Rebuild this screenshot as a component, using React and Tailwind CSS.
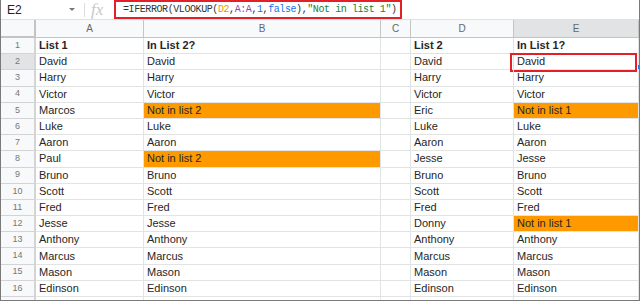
const cols = [
  { key: 'A', w: 'w-[108px]' },
  { key: 'B', w: 'w-[237px]' },
  { key: 'C', w: 'w-[30px]' },
  { key: 'D', w: 'w-[103px]' },
  { key: 'E', w: 'w-[125px]' },
];

const rows = [
  ['List 1', 'In List 2?', '', 'List 2', 'In List 1?'],
  ['David', 'David', '', 'David', 'David'],
  ['Harry', 'Harry', '', 'Harry', 'Harry'],
  ['Victor', 'Victor', '', 'Victor', 'Victor'],
  ['Marcos', 'Not in list 2', '', 'Eric', 'Not in list 1'],
  ['Luke', 'Luke', '', 'Luke', 'Luke'],
  ['Aaron', 'Aaron', '', 'Aaron', 'Aaron'],
  ['Paul', 'Not in list 2', '', 'Jesse', 'Jesse'],
  ['Bruno', 'Bruno', '', 'Bruno', 'Bruno'],
  ['Scott', 'Scott', '', 'Scott', 'Scott'],
  ['Fred', 'Fred', '', 'Fred', 'Fred'],
  ['Jesse', 'Jesse', '', 'Donny', 'Not in list 1'],
  ['Anthony', 'Anthony', '', 'Anthony', 'Anthony'],
  ['Marcus', 'Marcus', '', 'Marcus', 'Marcus'],
  ['Mason', 'Mason', '', 'Mason', 'Mason'],
  ['Edinson', 'Edinson', '', 'Edinson', 'Edinson'],
  ['', '', '', '', ''],
];

function FormulaBar() {
  return (
    <div className="flex h-[20px] items-center border-b border-[#e0e0e0] bg-white">
      <div className="flex w-[83px] items-center justify-between pl-[6px] pr-[9px]">
        <span className="text-[12px] text-[#222]">E2</span>
        <span className="h-0 w-0 border-x-[3px] border-t-[3px] border-x-transparent border-t-[#777]" />
      </div>
      <div className="h-[14px] w-px bg-[#dadce0]" />
      <span className="w-[29px] pl-[6px] font-['Liberation_Serif',serif] text-[17px] italic leading-none text-[#c8c8c8]">fx</span>
      <div className="flex h-[19px] w-[288px] items-center self-start border-2 border-[#e3202a] pl-[7px] font-['Liberation_Mono',monospace] text-[10px] tracking-[-0.42px] text-[#333]">
        <span>=IFERROR(VLOOKUP(</span>
        <span className="text-[#f09300]">D2</span>
        <span>,</span>
        <span className="text-[#8e44ad]">A:A</span>
        <span>,</span>
        <span className="text-[#1a73e8]">1</span>
        <span>,</span>
        <span className="text-[#1a73e8]">false</span>
        <span>),</span>
        <span className="text-[#188038]">"Not in list 1"</span>
        <span>)</span>
      </div>
    </div>
  );
}

export default function App() {
  return (
    <div className="h-[301px] w-[640px] overflow-hidden border-x border-b border-[#7a7a7a] bg-white font-['Liberation_Sans',Arial,sans-serif]">
      <FormulaBar />
      <div className="flex h-[18px]">
        <div className="w-[35px] border-b-2 border-r-2 border-[#c4c4c4] bg-[#f8f9fa]" />
        {cols.map((c) => (
          <div
            key={c.key}
            className={`${c.w} flex items-center justify-center border-b border-r border-[#c4c4c4] text-[10px] text-[#666] ${c.key === 'E' ? 'bg-[#e2e3e5]' : 'bg-[#f8f9fa]'}`}
          >
            {c.key}
          </div>
        ))}
      </div>
      {rows.map((row, i) => (
        <div key={i} className="flex h-[16.2px]">
          <div
            className={`flex w-[35px] items-center justify-center border-b border-r-2 border-[#d4d4d4] text-[9px] text-[#777] ${i === 1 ? 'bg-[#e2e3e5]' : 'bg-[#f8f9fa]'}`}
          >
            {i < 16 ? i + 1 : ''}
          </div>
          {row.map((text, j) => {
            const orange = text.startsWith('Not in');
            return (
              <div
                key={j}
                className={`${cols[j].w} relative flex items-center border-b border-r border-[#e2e3e3] pl-[3px] text-[11px] leading-none text-[#262626] ${orange ? 'bg-[#ff9900]' : ''} ${i === 0 ? 'font-bold' : ''}`}
              >
                {text}
                {i === 1 && j === 4 && (
                  <>
                    <div className="absolute -left-[4px] -top-[1px] h-[19px] w-[127px] border-2 border-[#e3202a]" />
                    <div className="absolute -right-[2px] bottom-0 h-[4px] w-[2px] bg-[#1a73e8]" />
                  </>
                )}
              </div>
            );
          })}
        </div>
      ))}
    </div>
  );
}
